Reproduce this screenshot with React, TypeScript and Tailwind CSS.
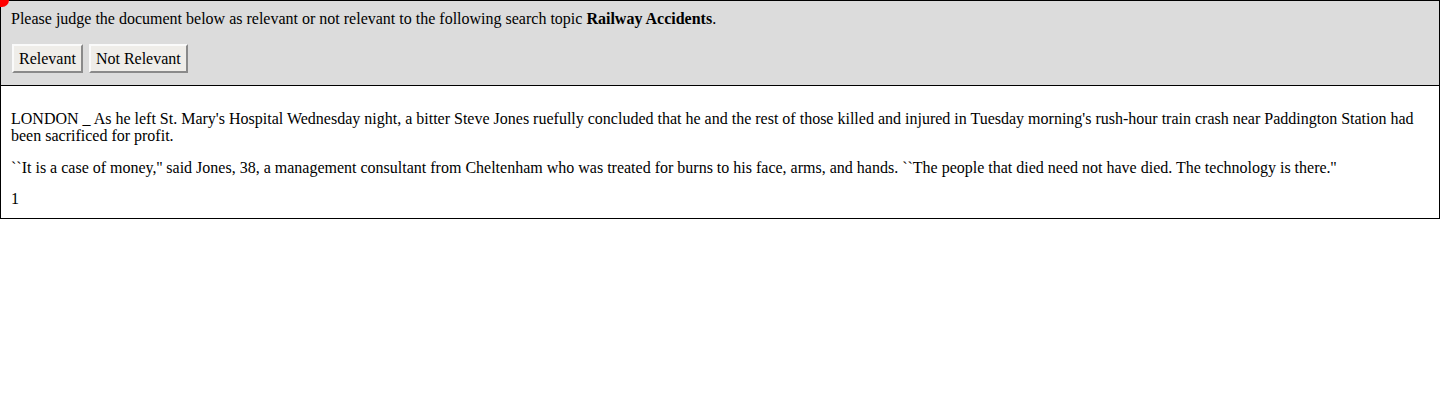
import React from "react";

const App = () => {
  return (
    <div className="relative bg-white text-black font-['Liberation_Serif',serif] text-[16px] leading-[17px] w-[1440px] h-[400px]">
      {/* red marker */}
      <div className="absolute -left-[6px] -top-[7px] w-[15px] h-[14px] rounded-full bg-[#ff0000]" />

      <div className="bg-[#dcdcdc] border border-black px-[10px] pt-[9px] pb-[12px]">
        <div>
          Please judge the document below as relevant or not relevant to the following search topic{" "}
          <b>Railway Accidents</b>.
        </div>
        <div className="flex gap-[6px] mt-[17px] ml-[1px]">
          <button className="bg-[#efede9] border-2 border-t-[#fafafa] border-l-[#fafafa] border-b-[#8a8a8a] border-r-[#8a8a8a] px-[5px] h-[29px]">
            Relevant
          </button>
          <button className="bg-[#efede9] border-2 border-t-[#fafafa] border-l-[#fafafa] border-b-[#8a8a8a] border-r-[#8a8a8a] px-[5px] h-[29px]">
            Not Relevant
          </button>
        </div>
      </div>

      <div className="border border-black border-t-0 px-[10px] pt-[24px] pb-[11px]">
        <p>
          LONDON _ As he left St. Mary's Hospital Wednesday night, a bitter Steve Jones ruefully concluded that he and the rest of those killed and injured in Tuesday morning's rush-hour train crash near Paddington Station had been sacrificed for profit.
        </p>
        <p className="mt-[15px]">
          ``It is a case of money,'' said Jones, 38, a management consultant from Cheltenham who was treated for burns to his face, arms, and hands. ``The people that died need not have died. The technology is there.''
        </p>
        <p className="mt-[14px]">1</p>
      </div>
    </div>
  );
};

export default App;
